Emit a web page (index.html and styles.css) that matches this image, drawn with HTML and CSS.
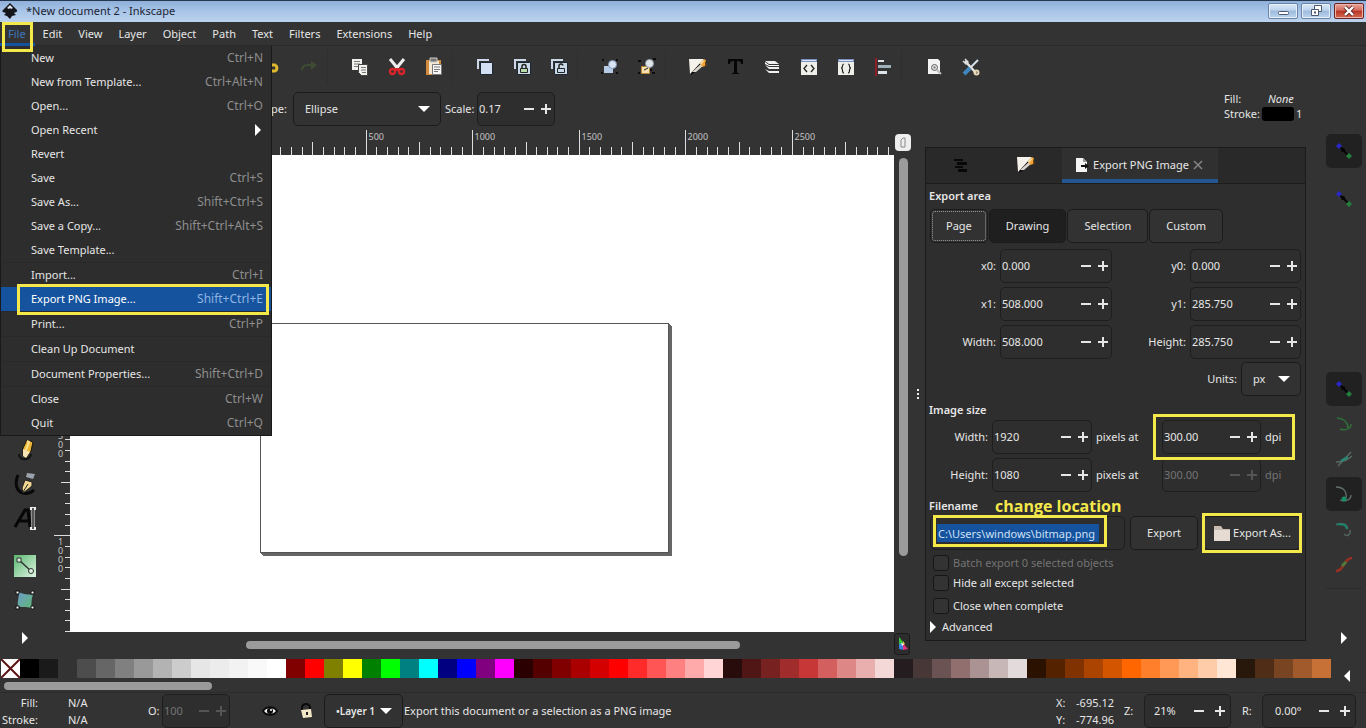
FILE: index.html
```html
<!DOCTYPE html>
<html lang="en">
<head>
<meta charset="utf-8">
<title>*New document 2 - Inkscape</title>
<link rel="stylesheet" href="styles.css">
</head>
<body>
<svg class="defs" aria-hidden="true">
  <symbol id="minus" viewBox="0 0 12 12"><path d="M1 6h10" stroke="currentColor" stroke-width="2"/></symbol>
  <symbol id="plus" viewBox="0 0 12 12"><path d="M1 6h10M6 1v10" stroke="currentColor" stroke-width="2"/></symbol>
  <symbol id="right" viewBox="0 0 8 12"><path d="M1 0l6 6-6 6z" fill="#fff"/></symbol>
  <symbol id="fillstroke" viewBox="0 0 20 20"><path d="M1 2h17v5L3 18z" fill="#0c0c0c"/><path d="M1 2h15L2 17z" fill="#f4f2ea"/><path d="M4 15L14 6l1 3-7 6z" fill="#d9d5cb"/><path d="M12 6l4-4 2 1-1 6-3 1z" fill="#f0a63a"/><path d="M12 6l3-3 1 1-3 4z" fill="#fbe3b0"/><path d="M17 4l2 4-2 2z" fill="#6a400f"/></symbol>
  <symbol id="snap" viewBox="0 0 20 20"><path d="M5 5l9 9" stroke="#050505" stroke-width="2"/><circle cx="9" cy="9" r="2" fill="#050505"/><path d="M5 2l3 3-3 3-3-3z" fill="#2a28c4"/><path d="M15 12l3 3-3 3-3-3z" fill="#23803c"/></symbol>
</svg>

<header class="titlebar">
  <svg class="logo" viewBox="0 0 18 18"><path d="M9 1l7 7c1 2-2 2-3 3l2 2-4 1-2 3-3-3-3-1 2-2C3 10 0 10 2 8z" fill="#15161a"/><path d="M9 3l3 3-2 1-1-1-1 1-2-1z" fill="#dfe8f3"/></svg>
  <h1>*New document 2 - Inkscape</h1>
  <div class="winbtns">
    <button aria-label="Minimize"><svg viewBox="0 0 14 12"><rect x="2.500" y="6.500" width="10" height="3" rx="1" fill="#fff" stroke="#4c5870"/></svg></button>
    <button aria-label="Restore"><svg viewBox="0 0 14 12"><path d="M5.500.5h7v6h-7z" fill="#fff" stroke="#4c5870"/><path d="M2.500 4.500h7v6h-7z" fill="#fff" stroke="#4c5870"/><path d="M5 7.500h2" stroke="#4c5870" stroke-width="2"/></svg></button>
    <button class="close" aria-label="Close"><svg viewBox="0 0 14 12"><path d="M3 2l8 8M11 2l-8 8" stroke="#5e2a28" stroke-width="4"/><path d="M3 2l8 8M11 2l-8 8" stroke="#fff" stroke-width="2.400"/></svg></button>
  </div>
</header>

<nav class="menubar">
  <button class="active">File</button><button>Edit</button><button>View</button><button>Layer</button><button>Object</button><button>Path</button><button>Text</button><button>Filters</button><button>Extensions</button><button>Help</button>
  <div class="mark mark-file"></div>
  <div class="menu" role="menu">
    <button role="menuitem">New<kbd>Ctrl+N</kbd></button>
    <button role="menuitem">New from Template...<kbd>Ctrl+Alt+N</kbd></button>
    <button role="menuitem">Open...<kbd>Ctrl+O</kbd></button>
    <button role="menuitem">Open Recent<svg class="sub"><use href="#right"/></svg></button>
    <button role="menuitem">Revert</button>
    <button role="menuitem">Save<kbd>Ctrl+S</kbd></button>
    <button role="menuitem">Save As...<kbd>Shift+Ctrl+S</kbd></button>
    <button role="menuitem">Save a Copy...<kbd>Shift+Ctrl+Alt+S</kbd></button>
    <button role="menuitem">Save Template...</button>
    <hr>
    <button role="menuitem">Import...<kbd>Ctrl+I</kbd></button>
    <button role="menuitem" class="selected">Export PNG Image...<kbd>Shift+Ctrl+E</kbd><span class="mark mark-item"></span></button>
    <hr>
    <button role="menuitem">Print...<kbd>Ctrl+P</kbd></button>
    <hr>
    <button role="menuitem">Clean Up Document</button>
    <hr>
    <button role="menuitem">Document Properties...<kbd>Shift+Ctrl+D</kbd></button>
    <hr>
    <button role="menuitem">Close<kbd>Ctrl+W</kbd></button>
    <button role="menuitem">Quit<kbd>Ctrl+Q</kbd></button>
  </div>
</nav>

<section class="top">
  <div class="bars">
    <div class="toolbar">
      <button aria-label="Undo"><svg viewBox="0 0 20 20"><path d="M4 8h9a4 3.500 0 010 6H9" fill="none" stroke="#e0b92c" stroke-width="3"/><path d="M7 3v10L1 8z" fill="#e0b92c"/></svg></button>
      <button aria-label="Redo"><svg viewBox="0 0 20 20"><path d="M3 13c0-4 3-5 6-5h4" fill="none" stroke="#3e4c33" stroke-width="2"/><path d="M12 4l6 4-6 5z" fill="#3e4c33"/></svg></button>
      <i></i>
      <button aria-label="Copy"><svg viewBox="0 0 20 20"><path d="M2 2h10v11H2z" fill="#f1f1ee"/><path d="M4 4.500h6M4 7h6M4 9.500h4" stroke="#777"/><path d="M8.500 7.500h9v11h-6l-3-3z" fill="#f1f1ee" stroke="#444"/><path d="M11 10.500h5M11 13h5M12 15.500h4" stroke="#777"/></svg></button>
      <button aria-label="Cut"><svg viewBox="0 0 20 20"><path d="M3 2l9 11M17 2L8 13" stroke="#eee" stroke-width="3"/><circle cx="5.500" cy="14.500" r="2.500" fill="none" stroke="#d8252c" stroke-width="2.400"/><circle cx="14.500" cy="14.500" r="2.500" fill="none" stroke="#d8252c" stroke-width="2.400"/><path d="M7 12l6 1M13 12l-6 1" stroke="#d8252c" stroke-width="2"/></svg></button>
      <button aria-label="Paste"><svg viewBox="0 0 20 20"><path d="M2 3h15v15H2z" fill="#d08c3c"/><path d="M5 4h10v13H5z" fill="#f3e8d4"/><path d="M6 1h7v4H6z" fill="#777" stroke="#ccc"/><path d="M8.500 7.500h9v10h-9z" fill="#f7f7f7" stroke="#777"/><path d="M10 10h6M10 12.500h6M10 14.500h4" stroke="#777"/></svg></button>
      <i></i>
      <button aria-label="Duplicate"><svg viewBox="0 0 20 20"><path d="M3 12V3h11" fill="none" stroke="#ccd8ea" stroke-width="2"/><path d="M5.500 5.500h12v12h-12z" fill="#d3e0f4" stroke="#1d2733"/></svg></button>
      <button aria-label="Clone"><svg viewBox="0 0 20 20"><path d="M3 12V3h11" fill="none" stroke="#ccd8ea" stroke-width="2"/><path d="M5.500 5.500h13v12h-13z" fill="#c9d9e6" stroke="#1d2733"/><path d="M10 11V9.500a2 2 0 014 0V11" fill="none" stroke="#222" stroke-width="1.500"/><path d="M8.500 11.500h7v4h-7z" fill="#b9d9a8" stroke="#222"/></svg></button>
      <button aria-label="Unlink clone"><svg viewBox="0 0 20 20"><path d="M3 12V3h11" fill="none" stroke="#ccd8ea" stroke-width="2"/><path d="M5.500 5.500h13v12h-13z" fill="#c9d9e6" stroke="#1d2733"/><path d="M10 11V9.500a2 2 0 014-1" fill="none" stroke="#222" stroke-width="1.500"/><path d="M8.500 11.500h7v4h-7z" fill="#c4d8ea" stroke="#222"/></svg></button>
      <i></i>
      <button aria-label="Group"><svg viewBox="0 0 20 20"><path d="M2 2h2v2H2zM16 2h2v2h-2zM1 15h2v2H1zM16 15h2v2h-2z" fill="#0c0c0c"/><path d="M4 9h9v7H4z" fill="#b8cce8"/><circle cx="12.500" cy="7.500" r="4" fill="#dae5f6" stroke="#7f96b4"/></svg></button>
      <button aria-label="Ungroup"><svg viewBox="0 0 20 20"><path d="M1 3h3v2H1zM16 1h3v2h-3zM1 15h2v2H1zM15 15h3v2h-3zM12 12h3v2h-3z" fill="#0c0c0c"/><path d="M4.500 9.500h8v7h-8z" fill="#f6dfae" stroke="#b98a33"/><circle cx="12.500" cy="6.500" r="4" fill="#dfe6ea" stroke="#8e9ca4"/><path d="M7 13l4-2" stroke="#222"/></svg></button>
      <i></i>
      <button aria-label="Fill and stroke"><svg><use href="#fillstroke"/></svg></button>
      <button aria-label="Text and font"><svg viewBox="0 0 20 20"><path d="M3 2h15v5h-2c0-2-1-3-4-3v11c0 1 1 1 2 1v1H7v-1c1 0 2 0 2-1V4C6 4 5 5 5 7H3z" fill="#060606"/></svg></button>
      <button aria-label="Layers"><svg viewBox="0 0 20 20"><path d="M3 4h10l4 3H7zM3 8l4 2h10v2H7zM3 12l4 2h10v2H7z" fill="#eee"/><path d="M3 5v2l4 2h10V8H7z" fill="#fff"/></svg></button>
      <button aria-label="XML editor"><svg viewBox="0 0 20 20"><path d="M2 2h16v16H2z" fill="#efefea"/><path d="M2 2h16v3H2z" fill="#7a90c0"/><path d="M3 3.500h14" stroke="#dfe6f6"/><path d="M8 8l-3 3.500L8 15M12 8l3 3.500-3 3.500" fill="none" stroke="#222" stroke-width="1.300"/></svg></button>
      <button aria-label="Selectors and CSS"><svg viewBox="0 0 20 20"><path d="M2 2h16v16H2z" fill="#efefea"/><path d="M2 2h16v3H2z" fill="#7a90c0"/><path d="M3 3.500h14" stroke="#dfe6f6"/><path d="M8 7c-3 0 0 4-3 4 3 0 0 5 3 5M12 7c3 0 0 4 3 4-3 0 0 5-3 5" fill="none" stroke="#222" stroke-width="1.200"/></svg></button>
      <button aria-label="Align and distribute"><svg viewBox="0 0 20 20"><path d="M3 1v18" stroke="#8e1f26" stroke-width="2"/><path d="M5 3h6v2H5z" fill="#dce4ea"/><path d="M5 8h13v3H5z" fill="#9fb0bd"/><path d="M5 14h9v3H5z" fill="#dce4ea"/></svg></button>
      <i></i>
      <button aria-label="Document properties"><svg viewBox="0 0 20 20"><path d="M4 2h10l2 2v13H4z" fill="#f3f3f3"/><circle cx="10.500" cy="10.500" r="3" fill="#ddd" stroke="#666"/><circle cx="10.500" cy="10.500" r="1" fill="#666"/><path d="M13 13l4 4" stroke="#bbb" stroke-width="2"/></svg></button>
      <button aria-label="Preferences"><svg viewBox="0 0 20 20"><path d="M4 4l11 12" stroke="#e3e3e0" stroke-width="2.500"/><path d="M2 4l3 3 2-2-3-3" fill="none" stroke="#ddd" stroke-width="1.500"/><circle cx="15.500" cy="15.500" r="2" fill="none" stroke="#e8d6b4" stroke-width="2"/><path d="M17 3l-7 7" stroke="#d8e2ea" stroke-width="2"/><path d="M9 11l-6 6" stroke="#3f86bf" stroke-width="4"/></svg></button>
    </div>
    <div class="controls">
      <label class="shape" for="shape">Shape:</label>
      <span class="drop drop-shape"><select id="shape"><option>Ellipse</option></select></span>
      <label class="scale" for="scale">Scale:</label>
      <span class="spin spin-scale"><input id="scale" value="0.17"><button aria-label="Decrease"><svg><use href="#minus"/></svg></button><button aria-label="Increase"><svg><use href="#plus"/></svg></button></span>
    </div>
  </div>
  <dl class="style">
    <dt>Fill:</dt><dd><em>None</em></dd>
    <dt>Stroke:</dt><dd><span class="stroke"></span>1</dd>
  </dl>
</section>

<main class="main">
  <aside class="toolbox">
    <button aria-label="Pencil"><svg viewBox="0 0 24 24"><path d="M6 16c0 8 12 6 12 0" fill="none" stroke="#111" stroke-width="2"/><path d="M10 10l4-8 6 2-2 9-5 7-3-2z" fill="#e9b637" stroke="#1b1508"/><path d="M10 11l7 3-4 6-3-2z" fill="#f7e3b6"/><path d="M14 3l2 1-3 8" fill="none" stroke="#fbe38c" stroke-width="2"/></svg></button>
    <button aria-label="Calligraphy"><svg viewBox="0 0 24 24"><path d="M5 3c-4 9-1 17 5 18 4 1 8 0 11-3" fill="none" stroke="#080808" stroke-width="3"/><path d="M14 1l8 1-2 5-7-2z" fill="#9aa3ad"/><path d="M12 8l7 2v4l-5 4-4 3-1-5z" fill="#f1d792" stroke="#222"/><path d="M15 12l-5 8" stroke="#222"/></svg></button>
    <button aria-label="Text"><svg viewBox="0 0 24 24"><path d="M2 21L12 4h3l2 17M7 15h9" fill="none" stroke="#060606" stroke-width="3"/><path d="M17 2.500h6M20 3v19M17 22.500h6" stroke="#eee" stroke-width="3"/><path d="M20 2v21" stroke="#222" stroke-width="1.500"/></svg></button>
    <button class="gap" aria-label="Gradient"><svg viewBox="0 0 24 24"><defs><linearGradient id="g1" x1="0" y1="0" x2="1" y2="1"><stop offset="0" stop-color="#5bb871"/><stop offset="1" stop-color="#dff3e2"/></linearGradient><linearGradient id="g2" x1="0" y1="0" x2="1" y2="1"><stop offset="0" stop-color="#6d9ccb"/><stop offset="1" stop-color="#5fb874"/></linearGradient></defs><path d="M1 1h22v22H1z" fill="url(#g1)"/><path d="M6 6l12 11" stroke="#333" stroke-width="1.500"/><path d="M4 4h4v4H4z" fill="#d9f1de" stroke="#333"/><circle cx="18" cy="17" r="2.500" fill="#d9f1de" stroke="#333"/></svg></button>
    <button aria-label="Mesh"><svg viewBox="0 0 24 24"><path d="M6 4c5 3 9 2 14 3-2 4-1 8-2 13-5-2-9 0-13-2-1-4 1-8 1-14z" fill="url(#g2)"/><path d="M3 3h3v3H3zM18 3h3v3h-3zM3 18h3v3H3zM18 18h3v3h-3z" fill="#fff" stroke="#111"/></svg></button>
    <button class="more" aria-label="More tools"><svg class="tri"><use href="#right"/></svg></button>
  </aside>

  <section class="work">
    <svg class="hruler" id="hruler" aria-hidden="true"></svg>
    <button class="zoomfit" aria-label="Zoom drawing"><svg viewBox="0 0 10 12"><path d="M3 3l2-2h2v9H3z" fill="none" stroke="#888"/></svg></button>
    <svg class="vruler" id="vruler" aria-hidden="true"></svg>
    <div class="canvas"><div class="page"></div></div>
    <div class="vscroll"><div></div></div>
    <div class="hscroll"><div></div></div>
    <button class="cms" aria-label="Color management"><svg viewBox="0 0 16 18"><path d="M4 2l5 6-5 2z" fill="#35c43a"/><path d="M4 9l4-1 1 7-5-1z" fill="#3b7fe0"/><path d="M8 8l5 6-5 1z" fill="#e2307a"/><path d="M8 6l2 3-2 1z" fill="#f0c23a"/><path d="M6 8l3 1-2 2z" fill="#fff"/></svg></button>
  </section>

  <div class="split"><svg viewBox="0 0 4 12"><path d="M1 1h2v2H1zM1 5h2v2H1zM1 9h2v2H1z" fill="#eee"/></svg></div>

  <section class="dialog">
    <div class="tabs" role="tablist">
      <button role="tab" class="t1" aria-label="Layers"><svg viewBox="0 0 20 20"><path d="M3 4h9v2H3zM6 7h10v3H6zM4 11h8v2H4zM7 14h9v3H7z" fill="#080808"/></svg></button>
      <button role="tab" class="t2" aria-label="Fill and stroke"><svg><use href="#fillstroke"/></svg></button>
      <button role="tab" class="t3" aria-selected="true"><svg class="doc" viewBox="0 0 14 16"><path d="M1 1h7l4 4v10H1z" fill="#f4f4f4"/><path d="M8 1v4h4z" fill="#999"/><path d="M6 8h4V6l4 3-4 3v-2H6z" fill="#111"/></svg>Export PNG Image<svg class="x" viewBox="0 0 10 10"><path d="M1 1l8 8M9 1L1 9" stroke="#858585" stroke-width="1.500"/></svg></button>
    </div>
    <div class="body">
      <h2>Export area</h2>
      <div class="areas">
        <button class="btn focus">Page</button><button class="btn on">Drawing</button><button class="btn">Selection</button><button class="btn">Custom</button>
      </div>
      <div class="coords">
        <label for="x0">x0:</label><span class="spin"><input id="x0" value="0.000"><button aria-label="Decrease"><svg><use href="#minus"/></svg></button><button aria-label="Increase"><svg><use href="#plus"/></svg></button></span>
        <label for="y0">y0:</label><span class="spin"><input id="y0" value="0.000"><button aria-label="Decrease"><svg><use href="#minus"/></svg></button><button aria-label="Increase"><svg><use href="#plus"/></svg></button></span>
        <label for="x1">x1:</label><span class="spin"><input id="x1" value="508.000"><button aria-label="Decrease"><svg><use href="#minus"/></svg></button><button aria-label="Increase"><svg><use href="#plus"/></svg></button></span>
        <label for="y1">y1:</label><span class="spin"><input id="y1" value="285.750"><button aria-label="Decrease"><svg><use href="#minus"/></svg></button><button aria-label="Increase"><svg><use href="#plus"/></svg></button></span>
        <label for="aw">Width:</label><span class="spin"><input id="aw" value="508.000"><button aria-label="Decrease"><svg><use href="#minus"/></svg></button><button aria-label="Increase"><svg><use href="#plus"/></svg></button></span>
        <label for="ah">Height:</label><span class="spin"><input id="ah" value="285.750"><button aria-label="Decrease"><svg><use href="#minus"/></svg></button><button aria-label="Increase"><svg><use href="#plus"/></svg></button></span>
      </div>
      <div class="units"><label for="units">Units:</label><span class="drop drop-units"><select id="units"><option>px</option></select></span></div>
      <h2 class="tight">Image size</h2>
      <div class="size">
        <label for="iw">Width:</label><span class="spin"><input id="iw" value="1920"><button aria-label="Decrease"><svg><use href="#minus"/></svg></button><button aria-label="Increase"><svg><use href="#plus"/></svg></button></span>
        <label for="dx" class="at">pixels at</label><span class="spin"><input id="dx" value="300.00"><button aria-label="Decrease"><svg><use href="#minus"/></svg></button><button aria-label="Increase"><svg><use href="#plus"/></svg></button><span class="mark mark-dpi"></span></span><span>dpi</span>
        <label for="ih">Height:</label><span class="spin"><input id="ih" value="1080"><button aria-label="Decrease"><svg><use href="#minus"/></svg></button><button aria-label="Increase"><svg><use href="#plus"/></svg></button></span>
        <label for="dy" class="at">pixels at</label><span class="spin off"><input id="dy" value="300.00" disabled><button disabled aria-label="Decrease"><svg><use href="#minus"/></svg></button><button disabled aria-label="Increase"><svg><use href="#plus"/></svg></button></span><span class="off">dpi</span>
      </div>
      <h2 class="tight"><label for="fname">Filename</label><span class="note">change location</span></h2>
      <div class="file">
        <span class="fname"><input id="fname" value="C:\Users\windows\bitmap.png"><span class="mark mark-name"></span></span>
        <button class="btn export">Export</button>
        <button class="btn as"><svg viewBox="0 0 18 18"><path d="M1 2h7l2 3h7v12H1z" fill="#c9bbb0"/><path d="M1 6h16v11H1z" fill="#e6dbd2"/></svg>Export As...<span class="mark mark-as"></span></button>
      </div>
      <label class="check off"><input type="checkbox" disabled>Batch export 0 selected objects</label>
      <label class="check"><input type="checkbox">Hide all except selected</label>
      <label class="check last"><input type="checkbox">Close when complete</label>
      <button class="adv"><svg class="tri"><use href="#right"/></svg>Advanced</button>
    </div>
  </section>

  <aside class="snapbar">
    <button class="on" aria-label="Enable snapping"><svg viewBox="0 0 20 20"><use href="#snap"/></svg></button>
    <button class="second" aria-label="Snap bounding boxes"><svg viewBox="0 0 20 20"><use href="#snap"/></svg></button>
    <button class="on third" aria-label="Snap nodes"><svg viewBox="0 0 20 20"><use href="#snap"/></svg></button>
    <button aria-label="Snap to paths"><svg viewBox="0 0 20 20"><path d="M3 4c6 0 11 4 11 10M6 15c5 2 11 0 11-5" fill="none" stroke="#2f7038" stroke-width="1.500"/></svg></button>
    <button aria-label="Snap intersections"><svg viewBox="0 0 20 20"><path d="M2 13c7 0 12-2 16-6M4 17L17 3" fill="none" stroke="#5d6b68" stroke-width="1.300"/><path d="M7 12l7-4" stroke="#258a74" stroke-width="2.400"/></svg></button>
    <button class="on" aria-label="Snap cusp nodes"><svg viewBox="0 0 20 20"><path d="M2 3c7 0 11 4 10 11M6 16c5 2 11 0 11-5" fill="none" stroke="#657070" stroke-width="1.300"/><circle cx="10" cy="15" r="2.500" fill="#178f66"/></svg></button>
    <button aria-label="Snap smooth nodes"><svg viewBox="0 0 20 20"><path d="M2 6c5-3 11-1 12 4M10 15c3 3 7 1 6-4" fill="none" stroke="#56625f" stroke-width="1.500"/><path d="M3 5l8 1 2 4" fill="none" stroke="#1c8268" stroke-width="2"/></svg></button>
    <button aria-label="Snap midpoints"><svg viewBox="0 0 20 20"><path d="M2 17c4 0 5-2 7-5s4-8 9-8" fill="none" stroke="#9c2f22" stroke-width="2.500"/><path d="M8 12l4-4" stroke="#4c7a3c" stroke-width="3"/></svg></button>
    <hr>
    <button class="more" aria-label="More snapping"><svg class="tri"><use href="#right"/></svg></button>
  </aside>
</main>

<div class="palette">
  <button class="none" aria-label="No color"><svg viewBox="0 0 19 19"><path d="M0 0h19v19H0z" fill="#fff"/><path d="M0 0l19 19M19 0L0 19" stroke="#5a1414" stroke-width="2"/></svg></button>
  <div class="swatches" id="swatches"></div>
  <svg class="back" viewBox="0 0 8 12"><path d="M7 0L1 6l6 6z" fill="#fff"/></svg>
</div>
<div class="pscroll"><div></div></div>

<footer class="status">
  <dl class="fs"><dt>Fill:</dt><dd>N/A</dd><dt>Stroke:</dt><dd>N/A</dd></dl>
  <label class="ol" for="op">O:</label>
  <span class="spin off spin-op"><input id="op" value="100" disabled><button disabled aria-label="Decrease"><svg><use href="#minus"/></svg></button><button disabled aria-label="Increase"><svg><use href="#plus"/></svg></button></span>
  <button class="ico eye" aria-label="Toggle layer visibility"><svg viewBox="0 0 16 16"><path d="M1 8c3-5 11-5 14 0-3 5-11 5-14 0z" fill="#eee" stroke="#0a0a0a" stroke-width="2"/><circle cx="8" cy="8" r="3" fill="#0a0a0a"/><circle cx="9" cy="7" r="1" fill="#fff"/></svg></button>
  <button class="ico" aria-label="Lock layer"><svg viewBox="0 0 16 16"><path d="M4 7V4c1-4 7-4 8 0v2" fill="none" stroke="#0a0a0a" stroke-width="2"/><path d="M3 7l10-1 1 8-9 1z" fill="#f3e9c8"/><path d="M9 9v3" stroke="#222" stroke-width="2"/></svg></button>
  <span class="drop drop-layer"><select aria-label="Layer"><option>•Layer 1</option></select></span>
  <span class="hint">Export this document or a selection as a PNG image</span>
  <dl class="xy"><dt>X:</dt><dd>-695.12</dd><dt>Y:</dt><dd>-774.96</dd></dl>
  <label class="zl" for="zoom">Z:</label>
  <span class="spin wide spin-zoom"><input id="zoom" value="21%"><button aria-label="Zoom out"><svg><use href="#minus"/></svg></button><button aria-label="Zoom in"><svg><use href="#plus"/></svg></button></span>
  <label class="rl" for="rot">R:</label>
  <span class="spin wide spin-rot"><input id="rot" value="0.00°"><button aria-label="Rotate left"><svg><use href="#minus"/></svg></button><button aria-label="Rotate right"><svg><use href="#plus"/></svg></button></span>
</footer>
<script src="app.js"></script>
</body>
</html>
```

FILE: styles.css
```css
* { box-sizing: border-box; }
html, body { height: 100%; }
body {
  margin: 0;
  display: flex;
  flex-direction: column;
  overflow: hidden;
  background: #333333;
  color: #e6e6e6;
  font: 11px/16px "Noto Sans", "Open Sans", sans-serif;
}
button, input, select { font: inherit; color: inherit; background: none; border: 0; padding: 0; margin: 0; outline: 0; }
dl, dd, h1, h2, hr { margin: 0; }
svg { display: block; flex: none; }
.defs { position: absolute; width: 0; height: 0; }

.mark { position: absolute; z-index: 1; border: 3px solid #f4e84a; pointer-events: none; }

/* Title bar */
.titlebar {
  flex: none; height: 22px; display: flex; align-items: center; padding-left: 1px;
  background: linear-gradient(#26384f 0 1px, #8fb0da 1px, #a8c4e8 50%, #bcd3ee);
  color: #1c2430;
}
.logo { width: 18px; height: 18px; }
.titlebar h1 { font-size: 11px; font-weight: 400; margin-left: 7px; flex: 1; }
.winbtns { display: flex; gap: 3px; padding: 0 2px 1px 0; }
.winbtns button {
  width: 30px; height: 16px; display: grid; place-items: center; border: 1px solid #6b84a6; border-radius: 2px;
  background: linear-gradient(#dce9f8, #bcd2ec 45%, #9db9dc 50%, #bcd6f0); box-shadow: inset 0 0 0 1px #e6f0fb;
}
.winbtns svg { width: 14px; height: 12px; }
.winbtns .close { background: linear-gradient(#e8a79c, #d46a5c 45%, #b93426 50%, #d46b50); border-color: #6a2320; box-shadow: inset 0 0 0 1px #eab5ab; }

/* Menus */
.menubar { flex: none; height: 24px; display: flex; position: relative; z-index: 5; border-bottom: 1px solid #2a2a2a; }
.menubar > button { padding: 0 8px; height: 24px; }
.menubar > .active { color: #3b77bd; box-shadow: inset 0 -3px #15539e; padding-right: 9px; }
.mark-file { left: 2px; top: 0; width: 31px; height: 30px; z-index: 2; }
.menu {
  position: absolute; left: 0; top: 24px; width: 272px; display: flex; flex-direction: column;
  background: #2d2d2d; border: solid #191919; border-width: 0 1px 1px;
}
.menu button { position: relative; height: 24px; display: flex; align-items: center; justify-content: space-between; padding: 0 8px 0 30px; }
.menu kbd { font: inherit; font-size: 12px; color: #8e8e8e; }
.menu hr { border: 0; height: 1px; background: #292929; }
.menu .selected { background: #15539e; color: #fff; }
.menu .selected kbd { color: #8fb4e2; }
.mark-item { left: 16px; top: -3px; right: 2px; bottom: -4px; }
.sub { width: 8px; height: 12px; margin-right: 1px; }

/* Toolbars */
.top { flex: none; height: 84px; display: flex; justify-content: space-between; }
.toolbar { height: 42px; display: flex; align-items: center; padding-left: 253px; }
.toolbar button { width: 37px; height: 34px; display: grid; place-items: center; }
.toolbar svg { width: 20px; height: 20px; }
.toolbar i { width: 14px; height: 34px; border-left: 1px solid #2f2f2f; }
.controls { display: flex; align-items: center; height: 42px; padding-left: 248px; }
.shape { width: 39px; text-align: right; margin-right: 6px; }
.drop-shape { width: 148px; margin-right: 4px; }
.scale { width: 32px; }
.spin-scale { width: 78px; }
.style { display: grid; grid-template-columns: 38px 44px; line-height: 15px; align-content: start; padding: 45px 60px 0 0; }
.style dd { display: flex; align-items: center; gap: 2px; }
.style em { margin-left: 6px; }
.stroke { width: 32px; height: 14px; border-radius: 3px; background: #000; }

.drop { position: relative; display: block; }
.drop select {
  appearance: none; width: 100%; height: 34px; padding: 0 11px; border: 1px solid #1b1b1b; border-radius: 5px; background: #323232;
}
.drop::after {
  content: ""; position: absolute; right: 11px; top: 14px; border: 6px solid transparent; border-top-color: #fff; border-bottom: 0; pointer-events: none;
}
.spin { position: relative; display: flex; align-items: center; height: 34px; border: 1px solid #1e1e1e; border-radius: 5px; background: #2e2e2e; }
.spin input { flex: 1; width: 0; min-width: 0; padding-left: 1px; }
.spin button { width: 17px; height: 32px; display: grid; place-items: center; }
.spin svg { width: 12px; height: 12px; }
.wide button { width: 21px; }
.off, .off input { color: #747474; }
.spin.off button { color: #555; }

/* Main area */
.main { flex: 1; min-height: 0; display: flex; }
.toolbox { width: 54px; display: flex; flex-direction: column; justify-content: flex-end; align-items: center; padding-bottom: 9px; overflow: hidden; }
.toolbox button { width: 34px; height: 34px; margin-right: 4px; display: grid; place-items: center; flex: none; }
.toolbox svg { width: 24px; height: 24px; }
.toolbox .gap { margin-top: 14px; }
.toolbox .more { height: 20px; margin-top: 11px; }
svg.tri, .toolbox svg.tri, .snapbar svg.tri { width: 8px; height: 12px; }

.work { flex: 1; min-width: 0; display: grid; grid-template: 25px 1fr 25px / 16px 1fr 17px; }
.hruler { grid-area: 1 / 1 / 2 / 3; width: 100%; height: 25px; }
.vruler { grid-area: 2 / 1; width: 16px; height: 100%; }
.zoomfit { grid-area: 1 / 3; width: 16px; height: 17px; margin: 4px 0 0 1px; border-radius: 4px; background: #eee; display: grid; place-items: center; }
.zoomfit svg { width: 10px; height: 12px; }
.canvas { grid-area: 2 / 2; position: relative; overflow: hidden; background: #fff; }
.page { position: absolute; left: 190px; top: 168px; width: 409px; height: 230px; border: 1px solid #555; box-shadow: 1px 1px #666, 2px 2px #666, 3px 3px #666; }
.vscroll { grid-area: 2 / 3; padding: 3px 3px 76px 5px; }
.vscroll div { height: 100%; border-radius: 5px; background: #9b9b9b; }
.hscroll { grid-area: 3 / 2; padding: 9px 154px 8px 176px; }
.hscroll div { height: 8px; border-radius: 4px; background: #9b9b9b; }
.cms { grid-area: 3 / 3; width: 16px; height: 22px; margin: 1px 0 0 0; border: 1px solid #1a1a1a; border-radius: 3px; display: grid; place-items: center; background: #2c2c2c; }
.cms svg { width: 16px; height: 18px; }
.hruler line, .vruler line { stroke: #dedede; shape-rendering: crispEdges; }
.hruler text, .vruler text { fill: #c4c4c4; font-size: 9px; line-height: 9px; }

.split { width: 14px; display: grid; place-items: center; }
.split svg { width: 4px; height: 12px; }

/* Dialog */
.dialog { width: 381px; margin: 17px 0 16px; border: 1px solid #1a1a1a; background: #2e2e2e; display: flex; flex-direction: column; }
.tabs { flex: none; height: 36px; display: flex; background: #292929; border-bottom: 1px solid #1c1c1c; }
.tabs button { display: flex; align-items: center; justify-content: center; padding-bottom: 2px; }
.tabs svg { width: 20px; height: 20px; }
.t1 { width: 70px; }
.tabs .t2 { width: 66px; padding-right: 6px; }
.tabs .t3 { width: 156px; gap: 4px; padding-right: 2px; background: #303030; box-shadow: inset 0 -4px #255691; }
.tabs svg.doc { width: 14px; height: 16px; }
.tabs svg.x { width: 10px; height: 10px; }
.body { padding: 0 4px 0 3px; }
.body h2 { font-size: 11px; font-weight: 600; line-height: 24px; height: 25px; }
.body h2.tight { line-height: 20px; height: 20px; margin-top: 4px; display: flex; }
.note { color: #f4e84a; font: 700 16px/20px "Open Sans", sans-serif; margin-left: 17px; }
.areas { display: flex; gap: 1px; padding-left: 1px; }
.btn { position: relative; height: 34px; border: 1px solid #1b1b1b; border-radius: 5px; background: #323232; padding: 0 15px; white-space: nowrap; }
.areas .btn + .btn { padding: 0 16px; }
.btn.on { background: #1f1f1f; }
.btn.focus { outline: 1px dotted #999; outline-offset: -3px; }
.coords { display: grid; grid-template-columns: 71px 112px 78px 111px; row-gap: 4px; align-items: center; margin-top: 6px; }
.coords label, .size label { text-align: right; padding-right: 4px; }
.units { display: flex; align-items: center; justify-content: flex-end; gap: 4px; margin: 3px 0 0; }
.drop-units { width: 60px; }
.size { display: grid; grid-template-columns: 63px 100px 70px 99px auto; row-gap: 4px; align-items: center; justify-content: start; }
.size .at { text-align: left; padding: 0 0 0 4px; }
.size > span:nth-child(5n) { padding-left: 4px; }
.mark-dpi { left: -10px; top: -7px; width: 142px; height: 46px; }
.file { display: flex; gap: 5px; padding-left: 1px; }
.fname { position: relative; flex: 1; height: 34px; border: 1px solid #1e1e1e; border-radius: 5px; display: flex; align-items: center; }
.fname input { width: 162px; margin-left: 6px; padding-left: 1px; background: #15539e; color: #cfe0f5; height: 18px; }
.mark-name { left: 2px; top: -2px; width: 174px; height: 32px; }
.export { width: 68px; }
.as { width: 98px; padding: 0; display: flex; align-items: center; justify-content: center; gap: 2px; }
.as svg { width: 18px; height: 18px; }
.mark-as { inset: -4px -2px; }
.check { display: flex; align-items: center; height: 20px; gap: 4px; }
.file + .check { margin-top: 3px; }
.check.last { margin-top: 3px; }
.check input { appearance: none; width: 16px; height: 16px; margin-left: 4px; border: 1px solid #161616; border-radius: 3px; background: #333; }
.adv { display: flex; align-items: center; gap: 5px; height: 20px; margin-top: 1px; }

/* Snap bar */
.snapbar { width: 60px; display: flex; flex-direction: column; align-items: center; padding: 4px 0 9px 16px; }
.snapbar button { width: 36px; height: 34px; flex: none; margin-bottom: 1px; border-radius: 5px; display: grid; place-items: center; }
.snapbar .on { background: #212121; }
.snapbar svg { width: 20px; height: 20px; }
.snapbar .second { margin-top: 13px; }
.snapbar .third { margin-top: 155px; }
.snapbar hr { width: 36px; border: 0; height: 1px; background: #2b2b2b; margin-top: 6px; }
.snapbar .more { margin-top: auto; height: 20px; margin-bottom: 0; }

/* Palette */
.palette { flex: none; height: 21px; display: flex; padding: 2px 0 0 1px; }
.none { width: 19px; height: 19px; }
.swatches { flex: 1; display: flex; overflow: hidden; }
.swatches button { flex: 0 0 19px; height: 19px; }
.back { width: 8px; height: 12px; margin: 11px 15px 0 0; overflow: visible; }
.pscroll { flex: none; height: 15px; padding: 4px 4px; border-bottom: 1px solid #2c2c2c; }
.pscroll div { width: 208px; height: 8px; border-radius: 4px; background: #9b9b9b; }

/* Status bar */
.status { flex: none; height: 35px; display: flex; align-items: center; }
.status dl { display: grid; line-height: 17px; }
.fs { grid-template-columns: 38px 60px; column-gap: 30px; margin-right: 20px; }
.fs dt { text-align: right; }
.ol { width: 14px; }
.spin-op { width: 68px; }
.ico { width: 36px; display: grid; place-items: center; }
.eye { margin-left: 22px; }
.ico svg { width: 16px; height: 16px; }
.drop-layer { width: 79px; font-size: 10px; font-weight: 600; }
.hint { flex: 1; padding-left: 1px; }
.xy { grid-template-columns: 20px 38px; margin-right: 2px; }
.xy dd { text-align: right; }
.zl { margin-left: 8px; width: 20px; }
.spin-zoom { width: 87px; }
.spin-zoom input { padding-left: 9px; }
.rl { margin-left: 11px; width: 20px; }
.spin-rot { width: 94px; margin-right: 10px; }
.spin-rot input { padding-left: 12px; }
```

FILE: app.js
```js
const NS = "http://www.w3.org/2000/svg";
const STEP = 106.6 / 10;

function add(parent, name, attrs, text) {
  const el = document.createElementNS(NS, name);
  for (const key in attrs) el.setAttribute(key, attrs[key]);
  if (text !== undefined) el.textContent = text;
  parent.appendChild(el);
}

// Horizontal ruler: origin of the document is 205px from the ruler's left edge.
const h = document.getElementById("hruler");
for (let i = -18; i < 60; i++) {
  const x = Math.round(205 + i * STEP) + 0.5;
  if (x < 16 || x > h.clientWidth) continue;
  const top = i % 10 === 0 ? 0 : i % 5 === 0 ? 12 : 17;
  add(h, "line", { x1: x, x2: x, y1: top, y2: 25 });
  if (i % 10 === 0) add(h, "text", { x: x + 2, y: 10 }, i * 50);
}

// Vertical ruler, labels written one digit per line.
const v = document.getElementById("vruler");
for (let i = -15; i < 60; i++) {
  const y = Math.round(167 + i * STEP) + 0.5;
  if (y < 0 || y > v.clientHeight) continue;
  const left = i % 10 === 0 ? 0 : i % 5 === 0 ? 7 : 11;
  add(v, "line", { x1: left, x2: 16, y1: y, y2: y });
  if (i % 10 === 0) {
    String(i * 50).split("").forEach((d, n) => add(v, "text", { x: 4, y: y + 9 + n * 9 }, d));
  }
}

const COLORS = ("000000 1a1a1a 333333 4d4d4d 666666 808080 999999 b3b3b3 cccccc e6e6e6 ececec f2f2f2 f9f9f9 ffffff " +
  "800000 ff0000 808000 ffff00 008000 00ff00 008080 00ffff 000080 0000ff 800080 ff00ff " +
  "2b0000 550000 800000 aa0000 d40000 ff0000 ff2a2a ff5555 ff8080 ffaaaa ffd5d5 " +
  "280b0b 501616 782121 a02c2c c83737 d35f5f de8787 e9afaf f4d7d7 " +
  "241c1f 483737 6c5353 916f6f ac9393 c8b7b7 e3dbdb " +
  "2b1100 552200 803300 aa4400 d45500 ff6600 ff7f2a ff9955 ffb380 ffccaa ffe6d5 " +
  "28170b 502d16 784421 a05a2c c87137").split(" ");
const swatches = document.getElementById("swatches");
for (const c of COLORS) {
  const b = document.createElement("button");
  b.style.background = "#" + c;
  b.setAttribute("aria-label", "#" + c);
  swatches.appendChild(b);
}
```
